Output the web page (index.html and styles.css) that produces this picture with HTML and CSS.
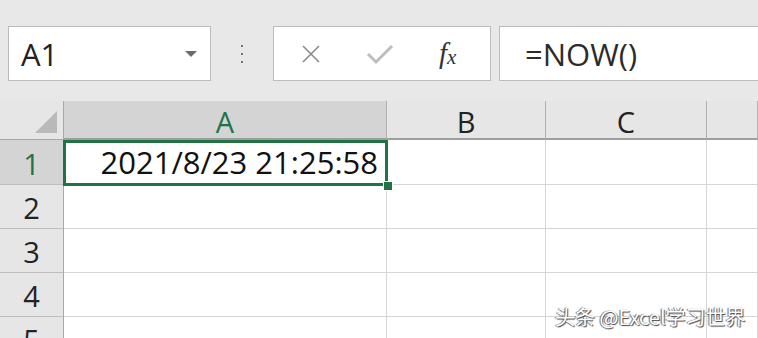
FILE: index.html
```html
<!DOCTYPE html>
<html>
<head>
  <meta charset="utf-8">
  <title>Excel - NOW()</title>
  <link rel="stylesheet" href="styles.css">
</head>
<body>
  <div class="toolbar">
    <div class="name-box">
      <span class="name-text">A1</span>
      <span class="name-arrow"></span>
    </div>
    <div class="grip">
      <span></span><span></span><span></span>
    </div>
    <div class="fx-box">
      <svg class="fx-icon" width="22" height="22" viewBox="0 0 22 22">
        <path d="M3 3 L19 19 M19 3 L3 19" stroke="#8a8a8a" stroke-width="1.6" fill="none"/>
      </svg>
      <svg class="fx-icon" width="28" height="22" viewBox="0 0 28 22">
        <path d="M2 11 L10 19 L26 3" stroke="#bdbdbd" stroke-width="3" fill="none"/>
      </svg>
      <span class="fx-label"><i>f</i><sub>x</sub></span>
    </div>
    <div class="formula">=NOW()</div>
  </div>

  <div class="sheet">
    <div class="grid">
      <div class="corner"><span class="corner-mark"></span></div>
      <div class="col-head active">A</div>
      <div class="col-head">B</div>
      <div class="col-head">C</div>
      <div class="col-head"></div>

      <div class="row-head active">1</div>
      <div class="cell value">2021/8/23 21:25:58</div>
      <div class="cell"></div>
      <div class="cell"></div>
      <div class="cell"></div>

      <div class="row-head">2</div>
      <div class="cell"></div>
      <div class="cell"></div>
      <div class="cell"></div>
      <div class="cell"></div>

      <div class="row-head">3</div>
      <div class="cell"></div>
      <div class="cell"></div>
      <div class="cell"></div>
      <div class="cell"></div>

      <div class="row-head">4</div>
      <div class="cell"></div>
      <div class="cell"></div>
      <div class="cell"></div>
      <div class="cell"></div>

      <div class="row-head">5</div>
      <div class="cell"></div>
      <div class="cell"></div>
      <div class="cell"></div>
      <div class="cell"></div>
    </div>

    <div class="selection"><span class="handle"></span></div>
    <div class="watermark">头条 @Excel学习世界</div>
  </div>
</body>
</html>
```

FILE: styles.css
```css
html, body {
  margin: 0;
  padding: 0;
  overflow: hidden;
}

body {
  background-color: #e8e8e8;
  font-family: "Open Sans", "Noto Sans", sans-serif;
  color: #222;
}

.toolbar {
  display: flex;
  align-items: stretch;
  height: 55px;
  padding: 26px 0 20px 8px;
}

.name-box {
  width: 203px;
  box-sizing: border-box;
  background-color: #fff;
  border: 1px solid #bcbcbc;
  display: flex;
  align-items: center;
  justify-content: space-between;
  padding: 0 13px 0 12px;
}

.name-text {
  font-size: 31px;
}

.name-arrow {
  width: 0;
  height: 0;
  border-left: 6px solid transparent;
  border-right: 6px solid transparent;
  border-top: 6px solid #6c6c6c;
}

.grip {
  width: 62px;
  display: flex;
  flex-direction: column;
  align-items: center;
  justify-content: center;
  gap: 6px;
}

.grip span {
  width: 2px;
  height: 2px;
  background-color: #7a7a7a;
}

.fx-box {
  width: 218px;
  box-sizing: border-box;
  background-color: #fff;
  border: 1px solid #bcbcbc;
  display: flex;
  align-items: center;
  padding-left: 26px;
  gap: 44px;
}

.fx-icon {
  display: block;
}

.fx-label {
  font-family: "Liberation Serif", "DejaVu Serif", serif;
  font-size: 29px;
  color: #333;
  margin-left: 1px;
}

.fx-label sub {
  font-size: 21px;
  font-style: italic;
  vertical-align: baseline;
  position: relative;
  top: 1px;
}

.formula {
  flex-grow: 1;
  margin-left: 8px;
  background-color: #fff;
  border: 1px solid #bcbcbc;
  border-right: none;
  display: flex;
  align-items: center;
  padding-left: 25px;
  font-size: 31px;
  color: #2b2b2b;
}

.sheet {
  position: relative;
}

.grid {
  display: grid;
  grid-template-columns: 64px 323px 159px 161px 51px;
  grid-template-rows: 39px 45px 44px 44px 44px 44px;
  background-color: #fff;
}

.corner {
  background-color: #e6e6e6;
  border-right: 1px solid #a8a8a8;
  border-bottom: 1px solid #a8a8a8;
  position: relative;
}

.corner-mark {
  position: absolute;
  right: 6px;
  bottom: 6px;
  width: 0;
  height: 0;
  border-left: 22px solid transparent;
  border-bottom: 22px solid #b9b9b9;
}

.col-head,
.row-head {
  background-color: #e6e6e6;
  display: flex;
  align-items: center;
  justify-content: center;
  font-size: 29px;
  color: #222;
  box-sizing: border-box;
}

.col-head {
  border-right: 1px solid #b0b0b0;
  border-bottom: 2px solid #9e9e9e;
  padding-top: 3px;
}

.row-head {
  border-right: 1px solid #a8a8a8;
  border-bottom: 1px solid #bdbdbd;
  padding-top: 2px;
}

.col-head.active,
.row-head.active {
  background-color: #d4d4d4;
  color: #217346;
}

.cell {
  box-sizing: border-box;
  border-right: 1px solid #d6d6d6;
  border-bottom: 1px solid #d6d6d6;
  display: flex;
  align-items: center;
  justify-content: flex-end;
  padding-right: 8px;
  font-size: 31px;
  color: #111;
}

.selection {
  position: absolute;
  left: 63px;
  top: 39px;
  width: 319px;
  height: 40px;
  border: 3px solid #217346;
}

.handle {
  position: absolute;
  right: -8px;
  bottom: -8px;
  width: 8px;
  height: 8px;
  background-color: #217346;
  border: 1px solid #fff;
}

.watermark {
  position: absolute;
  left: 555px;
  top: 201px;
  white-space: nowrap;
  font-family: "Noto Sans CJK SC", sans-serif;
  font-size: 20px;
  letter-spacing: 0;
  color: #fff;
  text-shadow: 1px 1px 1px #444, -1px 0 1px #666;
}
```
